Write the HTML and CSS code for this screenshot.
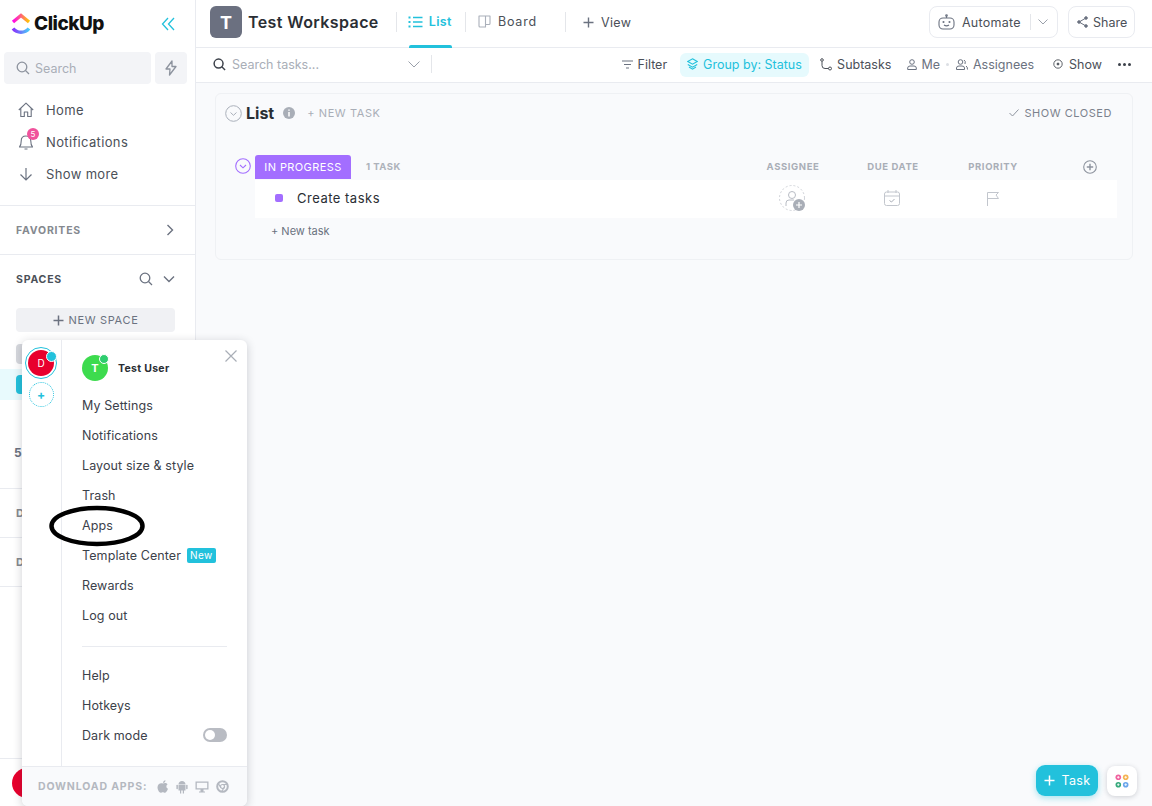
FILE: index.html
```html
<!DOCTYPE html>
<html lang="en">
<head>
<meta charset="utf-8">
<title>ClickUp</title>
<link rel="stylesheet" href="styles.css">
</head>
<body>
<div class="app">
  <aside class="sidebar">
    <div class="brand">
      <svg class="logo" width="20" height="22" viewBox="0 0 20 22"><defs><linearGradient id="lg1" x1="0" y1="0" x2="1" y2="0"><stop offset="0" stop-color="#ff02f0"/><stop offset="1" stop-color="#ffc800"/></linearGradient><linearGradient id="lg2" x1="0" y1="0" x2="1" y2="0"><stop offset="0" stop-color="#8930fd"/><stop offset="1" stop-color="#49ccf9"/></linearGradient></defs><path d="M2 9 L10 2.5 L18 9" fill="none" stroke="url(#lg1)" stroke-width="3.4"/><path d="M2 15.5 C6 20.500 14 20.500 18 15.500" fill="none" stroke="url(#lg2)" stroke-width="3.4"/></svg>
      <span class="brand-name">ClickUp</span>
      <svg class="collapse" width="14" height="14" viewBox="0 0 14 14" fill="none" stroke="#22c1dc" stroke-width="1.3"><path d="M7 1 L1.500 7 L7 13M13 1 L7.500 7 L13 13"/></svg>
    </div>
    <div class="search-row">
      <div class="search-box">
        <svg width="14" height="14" viewBox="0 0 14 14" fill="none" stroke="#8d939e" stroke-width="1.300"><circle cx="6" cy="6" r="4.800"/><path d="M9.500 9.500 L13 13"/></svg>
        <span>Search</span>
      </div>
      <div class="bolt"><svg width="12" height="16" viewBox="0 0 12 16" fill="none" stroke="#8d939e" stroke-width="1.300" stroke-linejoin="round"><path d="M7 1 L1 9 H5 L4.500 15 L11 6.500 H7 Z"/></svg></div>
    </div>
    <nav class="nav">
      <div class="nav-item">
        <svg width="16" height="16" viewBox="0 0 16 16" fill="none" stroke="#6b7280" stroke-width="1.100" stroke-linejoin="round"><path d="M0.800 8 L8 1.200 L15.200 8 M2.800 6.500 V14.500 H6.300 V10 H9.700 V14.500 H13.200 V6.500"/></svg>
        <span>Home</span>
      </div>
      <div class="nav-item">
        <span class="bell-wrap">
          <svg width="16" height="18" viewBox="0 0 16 18" fill="none" stroke="#6b7280" stroke-width="1.100" stroke-linejoin="round"><path d="M1.500 14 H14.500 C13 12.500 12.800 11 12.800 8 C12.800 5 11 3 8 3 C5 3 3.200 5 3.200 8 C3.200 11 3 12.500 1.500 14 Z M6.500 16 H9.500"/></svg>
          <span class="bell-badge">5</span>
        </span>
        <span>Notifications</span>
      </div>
      <div class="nav-item">
        <svg width="16" height="16" viewBox="0 0 16 16" fill="none" stroke="#6b7280" stroke-width="1.200"><path d="M8 2 V14 M2.500 8.500 L8 14 L13.500 8.500"/></svg>
        <span>Show more</span>
      </div>
    </nav>
    <div class="side-section favorites">
      <span class="side-label muted">FAVORITES</span>
      <svg width="8" height="12" viewBox="0 0 8 12" fill="none" stroke="#6b7280" stroke-width="1.400"><path d="M1.500 1 L6.500 6 L1.500 11"/></svg>
    </div>
    <div class="spaces">
      <div class="spaces-head">
        <span class="side-label">SPACES</span>
        <svg class="spaces-search" width="14" height="14" viewBox="0 0 14 14" fill="none" stroke="#6b7280" stroke-width="1.300"><circle cx="6" cy="6" r="4.800"/><path d="M9.500 9.500 L13 13"/></svg>
        <svg width="12" height="8" viewBox="0 0 12 8" fill="none" stroke="#6b7280" stroke-width="1.400"><path d="M1 1.500 L6 6.500 L11 1.500"/></svg>
      </div>
      <div class="new-space">
        <svg width="11" height="11" viewBox="0 0 11 11" stroke="#6b7280" stroke-width="1.500"><path d="M5.500 0.500 V10.500 M0.500 5.500 H10.500"/></svg>
        <span>NEW SPACE</span>
      </div>
      <div class="space-tile"></div>
      <div class="space-selected"><span class="space-cyan"></span></div>
      <div class="space-five">5</div>
    </div>
    <div class="side-row first">D</div>
    <div class="side-row">D</div>
    <div class="side-spacer"></div>
    <div class="side-foot"><span class="foot-avatar"></span></div>
  </aside>

  <main class="main">
    <header class="topbar">
      <span class="ws-tile">T</span>
      <span class="ws-name">Test Workspace</span>
      <span class="vsep first"></span>
      <div class="tab active">
        <svg width="15" height="12" viewBox="0 0 15 12" stroke="#22c1dc" stroke-width="1.300" fill="none"><path d="M5 1.500 H14.500 M5 6 H14.500 M5 10.500 H14.500"/><path d="M0.500 1.500 H2.500 M0.500 6 H2.500 M0.500 10.500 H2.500" stroke-width="1.800"/></svg>
        <span>List</span>
      </div>
      <span class="vsep"></span>
      <div class="tab board">
        <svg width="13" height="13" viewBox="0 0 13 13" fill="none" stroke="#aab0ba" stroke-width="1.100" stroke-linejoin="round"><path d="M1 1 H12 V8.500 Q12 9.500 11 9.500 H7.500 V12 H2 Q1 12 1 11 Z M7.500 1 V9.500"/></svg>
        <span>Board</span>
      </div>
      <span class="vsep wide"></span>
      <div class="tab view">
        <svg width="11" height="11" viewBox="0 0 11 11" stroke="#6b7280" stroke-width="1.400"><path d="M5.500 0.500 V10.500 M0.500 5.500 H10.500"/></svg>
        <span>View</span>
      </div>
      <div class="automate">
        <svg width="17" height="16" viewBox="0 0 17 16" fill="none" stroke="#6b7280" stroke-width="1.100"><rect x="1" y="4" width="15" height="11" rx="4"/><path d="M8.500 1.500 V4 M6 11 Q8.500 12.800 11 11"/><circle cx="8.500" cy="1.500" r="0.800"/><circle cx="5.500" cy="8" r="0.500"/><circle cx="11.500" cy="8" r="0.500"/></svg>
        <span>Automate</span>
        <i class="auto-sep"></i>
        <svg width="10" height="6" viewBox="0 0 10 6" fill="none" stroke="#9aa0aa" stroke-width="1"><path d="M0.500 0.500 L5 5 L9.500 0.500"/></svg>
      </div>
      <div class="share">
        <svg width="11" height="12" viewBox="0 0 11 12" fill="#6b7280" stroke="#6b7280" stroke-width="1"><circle cx="2" cy="6" r="1.300"/><circle cx="9" cy="2" r="1.300"/><circle cx="9" cy="10" r="1.300"/><path d="M2 6 L9 2 M2 6 L9 10"/></svg>
        <span>Share</span>
      </div>
    </header>

    <div class="toolbar">
      <svg width="13" height="13" viewBox="0 0 14 14" fill="none" stroke="#3c414a" stroke-width="1.600"><circle cx="6" cy="6" r="4.800"/><path d="M9.500 9.500 L13 13"/></svg>
      <span class="task-search">Search tasks...</span>
      <svg class="ts-chevron" width="12" height="7" viewBox="0 0 12 7" fill="none" stroke="#9aa0aa" stroke-width="1"><path d="M0.500 0.500 L6 6 L11.500 0.500"/></svg>
      <span class="ts-sep"></span>
      <div class="tool filter">
        <svg width="11" height="9" viewBox="0 0 11 9" stroke="#6b7280" stroke-width="1.100"><path d="M0 1 H11 M2 4.500 H9 M4 8 H7"/></svg>
        <span>Filter</span>
      </div>
      <div class="tool chip">
        <svg width="11" height="12" viewBox="0 0 11 12" fill="none" stroke="#22c1dc" stroke-width="1.100"><path d="M5.500 0.800 L10.200 3.500 L5.500 6.200 L0.800 3.500 Z M0.800 6.500 L5.500 9.200 L10.200 6.500 M2 9 L5.500 11.200 L9 9"/></svg>
        <span>Group by: Status</span>
      </div>
      <div class="tool subtasks">
        <svg width="12" height="13" viewBox="0 0 12 13" fill="none" stroke="#4b5058" stroke-width="1"><circle cx="2" cy="2" r="1.300"/><circle cx="10" cy="10.500" r="1.500"/><path d="M2 3.500 V7.500 Q2 10.500 5 10.500 H8.500"/></svg>
        <span>Subtasks</span>
      </div>
      <div class="tool me">
        <svg width="10" height="11" viewBox="0 0 10 11" fill="none" stroke="#6b7280" stroke-width="1"><circle cx="5" cy="3" r="2.300"/><path d="M0.700 10.500 V9 Q0.700 7 3 7 H7 Q9.300 7 9.300 9 V10.500 Z"/></svg>
        <span>Me</span>
      </div>
      <i class="me-dot"></i>
      <div class="tool assignees">
        <svg width="12" height="11" viewBox="0 0 12 11" fill="none" stroke="#6b7280" stroke-width="1"><circle cx="4.500" cy="3" r="2.300"/><path d="M0.500 10.500 V9 Q0.500 7 3 7 H6 Q8.500 7 8.500 9 V10.500 Z M8 1 Q10 2 9 5 M10 7 Q11.500 7.500 11.500 10.500"/></svg>
        <span>Assignees</span>
      </div>
      <div class="tool show">
        <svg width="10" height="10" viewBox="0 0 10 10" fill="none" stroke="#4b5058" stroke-width="0.900"><circle cx="5" cy="5" r="4.200"/><circle cx="5" cy="5" r="1" fill="#4b5058"/></svg>
        <span>Show</span>
      </div>
      <div class="more"><i></i><i></i><i></i></div>
    </div>

    <section class="content">
      <div class="list-card">
        <div class="list-head">
          <svg width="17" height="17" viewBox="0 0 17 17" fill="none" stroke="#aab0ba" stroke-width="1"><circle cx="8.500" cy="8.500" r="7.800"/><path d="M5.500 7.500 L8.500 10.300 L11.500 7.500"/></svg>
          <h1>List</h1>
          <svg class="info" width="12" height="12" viewBox="0 0 12 12"><circle cx="6" cy="6" r="6" fill="#a9aeb7"/><path d="M6 5 V9.500 M6 2.500 V3.800" stroke="#fff" stroke-width="1.500"/></svg>
          <span class="head-new">+ NEW TASK</span>
          <svg class="closed-check" width="10" height="8" viewBox="0 0 10 8" fill="none" stroke="#8d939e" stroke-width="1"><path d="M0.500 4 L3.500 7 L9.500 0.500"/></svg>
          <span class="show-closed">SHOW CLOSED</span>
        </div>
        <div class="group-head">
          <svg class="group-toggle" width="16" height="16" viewBox="0 0 16 16" fill="none" stroke="#a36eff" stroke-width="1.100"><circle cx="8" cy="8" r="7.300"/><path d="M5 7 L8 9.800 L11 7"/></svg>
          <span class="status">IN PROGRESS</span>
          <span class="count">1 TASK</span>
          <span class="col">ASSIGNEE</span>
          <span class="col">DUE DATE</span>
          <span class="col">PRIORITY</span>
          <span class="col-add">
            <svg width="14" height="14" viewBox="0 0 14 14" fill="none" stroke="#8d939e" stroke-width="1.100"><circle cx="7" cy="7" r="6.300"/><path d="M7 3.800 V10.200 M3.800 7 H10.200" stroke-width="1.400"/></svg>
          </span>
        </div>
        <div class="task-row">
          <i class="task-dot"></i>
          <span class="task-name">Create tasks</span>
          <span class="cell cell-shift">
            <svg width="27" height="27" viewBox="0 0 27 27" fill="none"><circle cx="13" cy="13" r="12.500" stroke="#d0d3d9" stroke-dasharray="2 2"/><circle cx="13" cy="10" r="3.500" stroke="#b8bcc4"/><path d="M7 21 V18 Q7 15 10 15 H15" stroke="#b8bcc4"/><circle cx="20" cy="20" r="6" fill="#a9aeb7"/><path d="M20 17 V23 M17 20 H23" stroke="#fff" stroke-width="1.200"/></svg>
          </span>
          <span class="cell cell-shift">
            <svg width="16" height="16" viewBox="0 0 16 16" fill="none" stroke="#c2c6cd" stroke-width="1"><rect x="0.500" y="2" width="15" height="13.500" rx="2"/><path d="M0.500 6 H15.500 M4 0 V3 M12 0 V3"/><path d="M5.500 10.500 L7.500 12 L10.500 9" stroke="#a9aeb7"/></svg>
          </span>
          <span class="cell">
            <svg width="12" height="15" viewBox="0 0 12 15" fill="none" stroke="#c2c6cd" stroke-width="1"><path d="M0.500 15 V1.500 H11.500 L9 4 L11.500 7.500 H0.500"/></svg>
          </span>
          <span class="cell-end"></span>
        </div>
        <div class="new-task">+ New task</div>
      </div>
    </section>
  </main>
</div>

<div class="popover">
  <div class="pop-body">
    <div class="pop-rail">
      <span class="rail-avatar"><span class="rail-inner">D</span><i class="rail-dot"></i></span>
      <span class="rail-add">+</span>
    </div>
    <div class="pop-menu">
      <svg class="pop-close" width="12" height="12" viewBox="0 0 12 12" stroke="#a9aeb7" stroke-width="1.200"><path d="M0.500 0.500 L11.500 11.500 M11.500 0.500 L0.500 11.500"/></svg>
      <div class="user">
        <span class="user-avatar">T<i></i></span>
        <span class="user-name">Test User</span>
      </div>
      <div class="pop-item">My Settings</div>
      <div class="pop-item">Notifications</div>
      <div class="pop-item">Layout size &amp; style</div>
      <div class="pop-item">Trash</div>
      <div class="pop-item">Apps</div>
      <div class="pop-item">Template Center <span class="new-tag">New</span></div>
      <div class="pop-item">Rewards</div>
      <div class="pop-item">Log out</div>
      <hr class="pop-rule">
      <div class="pop-item">Help</div>
      <div class="pop-item">Hotkeys</div>
      <div class="pop-item dark">Dark mode <span class="toggle"><i></i></span></div>
    </div>
  </div>
  <div class="pop-foot">
    <span>DOWNLOAD APPS:</span>
    <svg width="12" height="13" viewBox="0 0 12 13" fill="#b4b8c0"><path d="M6 3.500 C7.500 2.500 9.500 2.700 10.600 4.200 C8.800 5.300 9 8 11 8.800 C10.300 10.800 9 12.800 7.800 12.800 C7 12.800 6.700 12.300 5.800 12.300 C4.900 12.300 4.500 12.800 3.700 12.800 C2.300 12.800 0.500 9.800 0.500 7.300 C0.500 4 3.500 2.400 6 3.500 Z M6 3 C6 1.500 7.200 0.300 8.500 0.200 C8.600 1.700 7.400 3 6 3 Z"/></svg>
    <svg width="12" height="14" viewBox="0 0 12 14" fill="#b4b8c0"><path d="M2.500 4.200 C2.500 2.500 4 1 6 1 C8 1 9.500 2.500 9.500 4.200 Z M2.500 4.800 H9.500 V10.500 H8 V13.500 H6.800 V10.500 H5.200 V13.500 H4 V10.500 H2.500 Z"/><rect x="0.400" y="4.800" width="1.500" height="4.500" rx="0.700"/><rect x="10.100" y="4.800" width="1.500" height="4.500" rx="0.700"/></svg>
    <svg width="14" height="12" viewBox="0 0 14 12" fill="#b4b8c0"><path d="M0.500 0.500 H13.500 V8.500 H8.500 V10.500 H10 V11.500 H4 V10.500 H5.500 V8.500 H0.500 Z M1.800 1.800 V7.200 H12.200 V1.800 Z"/></svg>
    <svg width="13" height="13" viewBox="0 0 13 13" fill="none" stroke="#b4b8c0"><circle cx="6.500" cy="6.500" r="5.300" stroke-width="2"/><circle cx="6.500" cy="6.500" r="2" stroke-width="1.200"/><path d="M6.500 4.500 H11.500 M4.700 7.500 L2.200 3.200 M8.200 7.500 L5.500 11.800" stroke-width="1.200"/></svg>
  </div>
</div>

<svg class="ring" width="98" height="42" viewBox="0 0 98 42" fill="none"><ellipse cx="49" cy="21" rx="45.500" ry="18" stroke="#000" stroke-width="4.500"/></svg>

<div class="fabs">
  <div class="fab-task">
    <svg width="11" height="11" viewBox="0 0 11 11" stroke="#fff" stroke-width="1.500"><path d="M5.500 0.500 V10.500 M0.500 5.500 H10.500"/></svg>
    <span>Task</span>
  </div>
  <div class="fab-grid">
    <svg width="14" height="14" viewBox="0 0 14 14"><circle cx="3.300" cy="3.300" r="2.800" fill="#f0629f"/><circle cx="10.700" cy="3.300" r="2.800" fill="#f5b352"/><circle cx="3.300" cy="10.700" r="2.800" fill="#37a97c"/><circle cx="10.700" cy="10.700" r="2.800" fill="#6aa6ec"/><path d="M3.300 2 V4.600 M2 3.300 H4.600 M10.700 2 V4.600 M9.400 3.300 H12 M3.300 9.400 V12 M2 10.700 H4.600 M10.700 9.400 V12 M9.400 10.700 H12" stroke="#fff" stroke-width="0.800"/></svg>
  </div>
</div>
</body>
</html>
```

FILE: styles.css
```css
* { box-sizing: border-box; }
html, body { margin: 0; height: 100%; overflow: hidden; }
body {
  font-family: "Inter", "Open Sans", "Liberation Sans", sans-serif;
  font-size: 13px;
  color: #3c414a;
  background: #fff;
  position: relative;
}
svg { display: block; flex: none; }
.app { display: flex; height: 806px; }

/* sidebar */
.sidebar {
  width: 196px;
  flex: none;
  border-right: 1px solid #e9ebf0;
  display: flex;
  flex-direction: column;
}
.brand { display: flex; align-items: center; height: 47px; padding: 0 0 0 11px; }
.brand-name { font-weight: 800; font-size: 19px; letter-spacing: -0.500px; color: #111; margin-left: 3px; }
.collapse { margin-left: auto; margin-right: 20px; }
.search-row { display: flex; gap: 4px; padding: 5px 8px 0 4px; }
.search-box {
  flex: 1;
  height: 32px;
  background: #f3f4f7;
  border-radius: 4px;
  display: flex;
  align-items: center;
  gap: 5px;
  padding-left: 12px;
  color: #a9aeb7;
  font-size: 12.500px;
}
.bolt { width: 32px; height: 32px; background: #f3f4f7; border-radius: 4px; display: flex; align-items: center; justify-content: center; }
.nav { padding-top: 10px; height: 122px; border-bottom: 1px solid #e9ebf0; }
.nav-item { display: flex; align-items: center; height: 32px; padding-left: 18px; gap: 12px; font-size: 13px; letter-spacing: 0.350px; color: #4b5058; }
.bell-wrap { position: relative; display: block; width: 16px; }
.bell-badge {
  position: absolute;
  left: 9px;
  top: -5px;
  width: 12px;
  height: 12px;
  border-radius: 50%;
  background: #f0529c;
  color: #fff;
  font-size: 8px;
  line-height: 12px;
  text-align: center;
  letter-spacing: 0;
}
.side-section { display: flex; align-items: center; justify-content: space-between; }
.favorites { height: 49px; padding: 0 21px 0 16px; border-bottom: 1px solid #e9ebf0; }
.side-label { font-size: 10.500px; font-weight: 700; letter-spacing: 0.800px; color: #4b5058; }
.side-label.muted { color: #85898f; }
.spaces { height: 234px; padding: 0 20px 0 16px; border-bottom: 1px solid #e9ebf0; }
.spaces-head { display: flex; align-items: center; height: 48px; }
.spaces-search { margin-left: auto; margin-right: 10px; }
.new-space {
  margin-top: 5px;
  height: 24px;
  background: #f0f1f4;
  border-radius: 4px;
  display: flex;
  align-items: center;
  justify-content: center;
  gap: 5px;
  font-size: 11px;
  letter-spacing: 0.650px;
  color: #6b7280;
}
.space-tile { margin-top: 12px; width: 10px; height: 20px; background: #d6d8dd; border-radius: 4px 0 0 4px; }
.space-selected { margin: 5px -20px 0 -16px; height: 31px; background: #e8fafd; padding: 6px 0 0 16px; }
.space-cyan { display: block; width: 10px; height: 19px; background: #22c1dc; border-radius: 4px 0 0 4px; }
.space-five { margin: 44px 0 0 -2px; font-size: 12px; color: #6b7280; line-height: 18px; font-weight: 700; }
.side-row { height: 49px; padding: 0 0 0 16px; display: flex; align-items: center; font-size: 11px; font-weight: 700; color: #85898f; border-bottom: 1px solid #e9ebf0; }
.side-spacer { flex: 1; border-bottom: 1px solid #e9ebf0; }
.side-foot { height: 47px; display: flex; align-items: center; padding-left: 12px; }
.foot-avatar { width: 30px; height: 30px; border-radius: 50%; background: #e8002d; }

/* main */
.main { flex: 1; min-width: 0; display: flex; flex-direction: column; }
.topbar { height: 48px; flex: none; border-bottom: 1px solid #e9ebf0; display: flex; align-items: center; padding: 0 17px 4px 14px; }
.ws-tile { width: 32px; height: 32px; border-radius: 6px; background: #6b7080; color: #fff; font-weight: 700; font-size: 18px; display: flex; align-items: center; justify-content: center; margin-top: 1px; }
.ws-name { font-weight: 600; font-size: 16px; letter-spacing: 0.400px; margin: 1px 0 0 6px; color: #2a2e34; }
.vsep { width: 1px; height: 20px; background: #e4e6ea; }
.vsep.first { margin-left: 17px; margin-right: 11px; }
.vsep.wide { margin-left: 28px; margin-right: 17px; }
.tab { display: flex; align-items: center; gap: 7px; font-size: 12.500px; letter-spacing: 0.400px; color: #4b5058; position: relative; height: 44px; }
.tab.active { color: #22c1dc; font-weight: 600; gap: 6px; margin-right: 13px; }
.tab.active::after { content: ""; position: absolute; left: 1px; right: 0; bottom: -4px; height: 3px; background: #22c1dc; border-radius: 2px 2px 0 0; }
.tab.board { margin-left: 12px; gap: 7px; letter-spacing: 0.800px; }
.tab.view { gap: 7px; margin-top: 1px; }
.automate { margin-left: auto; width: 129px; height: 32px; border: 1px solid #e9ebf0; border-radius: 8px; display: flex; align-items: center; padding-left: 8px; gap: 7px; font-size: 12.500px; letter-spacing: 0.250px; color: #4b5058; margin-top: 1px; }
.auto-sep { width: 1px; height: 16px; background: #e4e6ea; margin-left: 2px; }
.share { margin-left: 10px; width: 67px; height: 32px; border: 1px solid #e9ebf0; border-radius: 8px; display: flex; align-items: center; padding-left: 8px; gap: 5px; font-size: 12.500px; color: #4b5058; margin-top: 1px; }

.toolbar { height: 35px; flex: none; border-bottom: 1px solid #e9ebf0; display: flex; align-items: center; padding: 0 0 2px 17px; }
.task-search { margin-left: 6px; color: #a9aeb7; font-size: 12.500px; width: 176px; }
.ts-sep { width: 1px; height: 18px; background: #e4e6ea; margin-left: 11px; }
.tool { display: flex; align-items: center; gap: 5px; font-size: 12.500px; color: #4b5058; }
.filter { margin-left: auto; }
.chip { margin: 2px 0 0 13px; height: 24px; width: 129px; padding: 0 0 2px 7px; background: #e6fafd; color: #22c1dc; border-radius: 6px; }
.subtasks { margin-left: 11px; }
.me { margin-left: 16px; color: #6b7280; gap: 4px; }
.me-dot { width: 3px; height: 3px; border-radius: 50%; background: #dcdfe4; margin-left: 6px; }
.assignees { margin-left: 7px; color: #6b7280; }
.show { margin-left: 19px; gap: 6px; }
.more { display: flex; gap: 2px; margin: 0 21px 0 16px; }
.more i { width: 3px; height: 3px; border-radius: 50%; background: #3c414a; }

.content { flex: 1; background: #f9fafc; padding: 10px 19px 0 19px; min-height: 0; }
.list-card { height: 167px; background: #f9fafc; border: 1px solid #eff1f4; border-radius: 6px; padding: 0 15px 0 9px; }
.list-head { display: flex; align-items: center; height: 38px; }
.list-head h1 { margin: 0 0 0 4px; font-size: 16px; font-weight: 700; color: #2a2e34; }
.info { margin-left: 9px; }
.head-new { margin-left: 12px; font-size: 11px; letter-spacing: 0.600px; color: #a9aeb7; }
.closed-check { margin-left: auto; margin-right: 5px; }
.show-closed { font-size: 11px; letter-spacing: 0.550px; color: #7c828d; margin-right: 5px; }
.group-head { display: flex; align-items: center; margin: 22px 0 1px 10px; height: 25px; }
.group-toggle { margin-right: 4px; margin-top: -2px; }
.status { width: 96px; height: 24px; background: #a36eff; color: #fff; border-radius: 3px 3px 0 0; font-size: 11px; letter-spacing: 0.400px; display: flex; align-items: center; justify-content: center; }
.count { margin-left: 15px; flex: 1; font-size: 9.500px; font-weight: 700; letter-spacing: 0.500px; color: #aeb2ba; }
.col { width: 100px; text-align: center; font-size: 9.500px; font-weight: 700; letter-spacing: 0.600px; color: #a9aeb7; }
.col-add { width: 74px; display: flex; justify-content: flex-end; padding-right: 20px; margin-top: 1px; }
.task-row { display: flex; align-items: center; height: 38px; margin-left: 30px; background: #fff; padding: 0 0 2px 20px; }
.task-dot { width: 8px; height: 8px; border-radius: 2px; background: #a36eff; }
.task-name { margin-left: 14px; flex: 1; font-size: 13px; letter-spacing: 0.500px; color: #2a2e34; }
.cell { width: 100px; display: flex; justify-content: center; }
.cell-shift { padding-right: 2px; }
.cell-end { width: 74px; }
.new-task { margin: 6px 0 0 46px; font-size: 11px; color: #6b7280; line-height: 15px; }

/* popover */
.popover {
  position: absolute;
  left: 22px;
  top: 340px;
  width: 225px;
  height: 466px;
  background: #fff;
  border-radius: 6px;
  box-shadow: 0 2px 10px rgba(30, 35, 50, 0.22);
  display: flex;
  flex-direction: column;
}
.pop-body { flex: 1; display: flex; min-height: 0; }
.pop-rail { width: 40px; border-right: 1px solid #e9ebf0; display: flex; flex-direction: column; align-items: center; padding-top: 7px; gap: 3px; }
.rail-avatar { position: relative; width: 32px; height: 32px; border: 1px solid #22c1dc; border-radius: 50%; padding: 2px; display: block; margin-left: -1px; }
.rail-inner { display: flex; width: 26px; height: 26px; border-radius: 50%; background: #e8002d; color: #fff; font-size: 10px; align-items: center; justify-content: center; }
.rail-dot { position: absolute; right: -1px; top: 3px; width: 9px; height: 9px; border-radius: 50%; background: #22c1dc; border: 1px solid #fff; box-sizing: content-box; }
.rail-add { width: 25px; height: 25px; border: 1px dotted #22c1dc; border-radius: 50%; color: #22c1dc; font-size: 12px; font-weight: 700; display: flex; align-items: center; justify-content: center; margin-left: -1px; }
.pop-menu { flex: 1; position: relative; padding: 15px 20px 0 20px; }
.pop-close { position: absolute; right: 10px; top: 10px; }
.user { display: flex; align-items: center; gap: 10px; height: 26px; margin-bottom: 9px; }
.user-avatar { position: relative; width: 26px; height: 26px; border-radius: 50%; background: #3ddb4e; color: #fff; font-weight: 700; font-size: 11px; display: flex; align-items: center; justify-content: center; }
.user-avatar i { position: absolute; right: -1px; top: -1px; width: 8px; height: 8px; border-radius: 50%; background: #2ecd6f; border: 1px solid #fff; box-sizing: content-box; }
.user-name { font-size: 10.500px; font-weight: 700; letter-spacing: 0.300px; color: #2a2e34; }
.pop-item { height: 30px; display: flex; align-items: center; gap: 5px; font-size: 12.500px; letter-spacing: 0.100px; color: #3c414a; }
.new-tag { background: #22c1dc; color: #fff; font-size: 10px; border-radius: 2px; padding: 1px 3px; margin-left: 1px; line-height: 13px; letter-spacing: 0.400px; }
.pop-rule { border: 0; border-top: 1px solid #e9ebf0; margin: 16px 0 13px; }
.dark { justify-content: space-between; }
.toggle { width: 24px; height: 14px; border-radius: 7px; background: #b9bcc3; position: relative; display: block; }
.toggle i { position: absolute; left: 2px; top: 2px; width: 10px; height: 10px; border-radius: 50%; background: #fff; }
.pop-foot { height: 40px; flex: none; border-top: 1px solid #e9ebf0; background: #f9fafc; border-radius: 0 0 6px 6px; display: flex; align-items: center; padding: 0 0 0 16px; gap: 7px; font-size: 10.500px; font-weight: 700; letter-spacing: 0.850px; color: #b4b8c0; }
.pop-foot span { margin-right: 3px; }
.ring { position: absolute; left: 48px; top: 505px; }

/* floating */
.fabs { position: absolute; left: 1036px; top: 765px; display: flex; align-items: center; gap: 9px; }
.fab-task { width: 62px; height: 31px; border-radius: 9px; background: #22c1dc; color: #fff; font-size: 12.500px; letter-spacing: 0.300px; display: flex; align-items: center; justify-content: center; gap: 7px; box-shadow: 0 2px 6px rgba(34, 193, 220, 0.4); }
.fab-grid { width: 30px; height: 30px; border-radius: 8px; background: #fff; box-shadow: 0 1px 5px rgba(30, 35, 50, 0.2); display: flex; align-items: center; justify-content: center; }
```
